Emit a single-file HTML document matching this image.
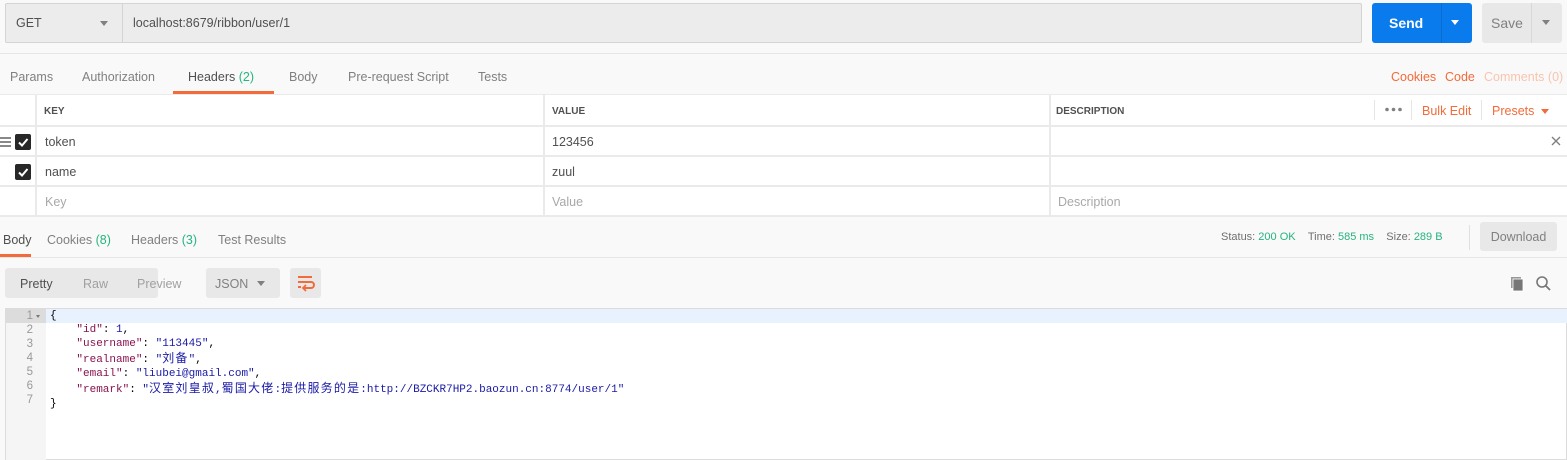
<!DOCTYPE html>
<html><head><meta charset="utf-8"><style>
*{margin:0;padding:0;box-sizing:border-box}
body{width:1567px;height:460px;background:#f9f9f9;font-family:"Liberation Sans","Noto Sans CJK SC",sans-serif;font-size:12px;color:#505050;position:relative;overflow:hidden}
.a{position:absolute}
.tab{position:absolute;top:70px;font-size:12.5px;color:#808080}
.hd{font-size:10px;font-weight:bold;color:#505050;position:absolute;top:106px}
.cb{position:absolute;width:16px;height:16px;background:#282828;border-radius:2px}
.cb svg{position:absolute;left:2px;top:2px}
.cell{position:absolute;font-size:12.5px;color:#505050}
.ph{color:#a8a8a8}
.code{position:absolute;left:50px;font-family:"Liberation Mono","Noto Sans CJK SC",monospace;font-size:11px;line-height:14px;white-space:pre;color:#000}
.k{color:#881350}.s{color:#1a1aa6}.n{color:#1a1aa6}
.cjk{font-family:"Noto Sans CJK SC",sans-serif;font-size:12px;letter-spacing:1.2px}
.ln{position:absolute;left:5px;width:41px;text-align:right;padding-right:13px;font-family:"Liberation Sans",sans-serif;font-size:11.5px;color:#999;line-height:14px}
</style></head><body>
<div class="a" style="left:5px;top:3px;width:1357px;height:40px;background:#ececec;border:1px solid #d4d4d4;border-radius:2px"></div>
<div class="a" style="left:122px;top:4px;width:1px;height:38px;background:#d4d4d4"></div>
<div class="a" style="left:16px;top:16px;font-size:12.5px;color:#505050">GET</div>
<div class="a" style="left:100px;top:21px;border:4px solid transparent;border-top:5px solid #808080"></div>
<div class="a" style="left:133px;top:16px;font-size:12.5px;color:#505050">localhost:8679/ribbon/user/1</div>
<div class="a" style="left:1372px;top:3px;width:100px;height:40px;background:#097bed;border-radius:3px"></div>
<div class="a" style="left:1441px;top:3px;width:1px;height:40px;background:#0a6cd0"></div>
<div class="a" style="left:1389px;top:15px;font-size:14px;font-weight:bold;color:#fff">Send</div>
<div class="a" style="left:1451px;top:20px;border:4px solid transparent;border-top:5px solid #fff"></div>
<div class="a" style="left:1482px;top:3px;width:80px;height:40px;background:#e8e8e8;border-radius:3px"></div>
<div class="a" style="left:1531px;top:3px;width:1px;height:40px;background:#d8d8d8"></div>
<div class="a" style="left:1491px;top:15px;font-size:14px;color:#808080">Save</div>
<div class="a" style="left:1542px;top:20px;border:4px solid transparent;border-top:5px solid #808080"></div>
<div class="a" style="left:0;top:53px;width:1567px;height:1px;background:#e6e6e6"></div>
<div class="tab" style="left:10px">Params</div>
<div class="tab" style="left:82px">Authorization</div>
<div class="tab" style="left:188px;color:#505050">Headers <span style="color:#26b47f">(2)</span></div>
<div class="tab" style="left:289px">Body</div>
<div class="tab" style="left:348px">Pre-request Script</div>
<div class="tab" style="left:478px">Tests</div>
<div class="a" style="left:173px;top:91px;width:101px;height:3px;background:#f26b3a"></div>
<div class="tab" style="left:1391px;color:#f26b3a">Cookies</div>
<div class="tab" style="left:1445px;color:#f26b3a">Code</div>
<div class="tab" style="left:1484px;color:#f8c4ae">Comments (0)</div>
<div class="a" style="left:0;top:94px;width:1567px;height:123px;background:#fff"></div>
<div class="a" style="left:0;top:94px;width:1567px;height:1px;background:#eaeaea"></div>
<div class="a" style="left:0;top:125px;width:1567px;height:2px;background:#eaeaea"></div>
<div class="a" style="left:0;top:155px;width:1567px;height:2px;background:#eaeaea"></div>
<div class="a" style="left:0;top:185px;width:1567px;height:2px;background:#eaeaea"></div>
<div class="a" style="left:0;top:215px;width:1567px;height:2px;background:#eaeaea"></div>
<div class="a" style="left:35px;top:94px;width:2px;height:123px;background:#eaeaea"></div>
<div class="a" style="left:543px;top:94px;width:2px;height:123px;background:#eaeaea"></div>
<div class="a" style="left:1049px;top:94px;width:2px;height:123px;background:#eaeaea"></div>
<div class="hd" style="left:44px">KEY</div>
<div class="hd" style="left:552px">VALUE</div>
<div class="hd" style="left:1056px">DESCRIPTION</div>
<div class="a" style="left:1374px;top:100px;width:1px;height:20px;background:#e6e6e6"></div>
<svg class="a" style="left:1385px;top:107px" width="18" height="5"><circle cx="2" cy="2.5" r="1.8" fill="#808080"/><circle cx="8.5" cy="2.5" r="1.8" fill="#808080"/><circle cx="15" cy="2.5" r="1.8" fill="#808080"/></svg>
<div class="a" style="left:1411px;top:100px;width:1px;height:20px;background:#e6e6e6"></div>
<div class="a" style="left:1422px;top:104px;font-size:12.5px;color:#f26b3a">Bulk Edit</div>
<div class="a" style="left:1481px;top:100px;width:1px;height:20px;background:#e6e6e6"></div>
<div class="a" style="left:1492px;top:104px;font-size:12.5px;color:#f26b3a">Presets</div>
<div class="a" style="left:1541px;top:109px;border:4px solid transparent;border-top:5px solid #f26b3a"></div>
<div class="a" style="left:0;top:137px;width:11px;height:2px;background:#888;box-shadow:0 4px 0 #888,0 8px 0 #888"></div>
<div class="cb" style="left:15px;top:134px"><svg width="12" height="12"><path d="M2 6.5 L5 9.5 L10.5 3" stroke="#fff" stroke-width="2" fill="none"/></svg></div>
<div class="cb" style="left:15px;top:164px"><svg width="12" height="12"><path d="M2 6.5 L5 9.5 L10.5 3" stroke="#fff" stroke-width="2" fill="none"/></svg></div>
<div class="cell" style="left:45px;top:135px">token</div>
<div class="cell" style="left:552px;top:135px">123456</div>
<svg class="a" style="left:1551px;top:136px" width="10" height="10"><path d="M1 1L9 9M9 1L1 9" stroke="#808080" stroke-width="1.4"/></svg>
<div class="cell" style="left:45px;top:165px">name</div>
<div class="cell" style="left:552px;top:165px">zuul</div>
<div class="cell ph" style="left:45px;top:195px">Key</div>
<div class="cell ph" style="left:552px;top:195px">Value</div>
<div class="cell ph" style="left:1058px;top:195px">Description</div>
<div class="tab" style="left:3px;top:233px;color:#505050">Body</div>
<div class="tab" style="left:47px;top:233px">Cookies <span style="color:#26b47f">(8)</span></div>
<div class="tab" style="left:131px;top:233px">Headers <span style="color:#26b47f">(3)</span></div>
<div class="tab" style="left:218px;top:233px">Test Results</div>
<div class="a" style="left:0;top:254px;width:31px;height:3px;background:#f26b3a"></div>
<div class="a" style="left:0;top:257px;width:1567px;height:1px;background:#e6e6e6"></div>
<div class="a" style="left:1221px;top:231px;font-size:11px;color:#707070">Status: <span style="color:#26b47f">200 OK</span>&nbsp;&nbsp;&nbsp;&nbsp;Time: <span style="color:#26b47f">585 ms</span>&nbsp;&nbsp;&nbsp;&nbsp;Size: <span style="color:#26b47f">289 B</span></div>
<div class="a" style="left:1469px;top:225px;width:1px;height:25px;background:#e0e0e0"></div>
<div class="a" style="left:1480px;top:222px;width:77px;height:29px;background:#e8e8e8;border-radius:3px;font-size:12.5px;color:#808080;text-align:center;line-height:30px">Download</div>
<div class="a" style="left:5px;top:268px;width:153px;height:30px;background:#e8e8e8;border-radius:3px"></div>
<div class="a" style="left:20px;top:277px;font-size:12.5px;color:#505050">Pretty</div>
<div class="a" style="left:83px;top:277px;font-size:12.5px;color:#a0a0a0">Raw</div>
<div class="a" style="left:137px;top:277px;font-size:12.5px;color:#a0a0a0">Preview</div>
<div class="a" style="left:206px;top:268px;width:74px;height:30px;background:#e8e8e8;border-radius:3px"></div>
<div class="a" style="left:215px;top:277px;font-size:12.5px;color:#808080">JSON</div>
<div class="a" style="left:257px;top:281px;border:4px solid transparent;border-top:5px solid #808080"></div>
<div class="a" style="left:290px;top:268px;width:31px;height:30px;background:#e8e8e8;border-radius:3px"></div>
<svg class="a" style="left:296px;top:274px" width="20" height="18"><path d="M2 3H16M2 8H15a3 3 0 0 1 0 6H8M2 13H5" stroke="#f26b3a" stroke-width="2" fill="none"/><path d="M10 11L7 14L10 17" stroke="#f26b3a" stroke-width="1.8" fill="none"/></svg>
<svg class="a" style="left:1510px;top:276px" width="16" height="16"><rect x="1" y="1" width="10" height="11" fill="#999"/><rect x="3" y="3" width="10" height="12" fill="#777" stroke="#fff" stroke-width="0.8"/></svg>
<svg class="a" style="left:1535px;top:275px" width="18" height="18"><circle cx="7" cy="7" r="5" stroke="#777" stroke-width="1.6" fill="none"/><path d="M10.5 10.5L15 15" stroke="#777" stroke-width="1.8"/></svg>
<div class="a" style="left:5px;top:308px;width:1562px;height:152px;background:#fff;border:1px solid #dcdcdc"></div>
<div class="a" style="left:6px;top:309px;width:40px;height:151px;background:#f5f5f5"></div>
<div class="a" style="left:46px;top:309px;width:1521px;height:14px;background:#e8f2fe"></div>
<div class="a" style="left:6px;top:309px;width:40px;height:14px;background:#dcdcdc"></div>
<div class="ln" style="top:309px">1<br>2<br>3<br>4<br>5<br>6<br>7</div>
<div class="a" style="left:36px;top:315px;border:2.5px solid transparent;border-top:3px solid #777"></div>
<div class="code" style="top:309px">{
    <span class="k">"id"</span>: <span class="n">1</span>,
    <span class="k">"username"</span>: <span class="s">"113445"</span>,
    <span class="k">"realname"</span>: <span class="s">"<span class="cjk">刘备</span>"</span>,
    <span class="k">"email"</span>: <span class="s">"liubei@gmail.com"</span>,
    <span class="k">"remark"</span>: <span class="s">"<span class="cjk">汉室刘皇叔</span>,<span class="cjk">蜀国大佬</span>:<span class="cjk">提供服务的是</span>:http://BZCKR7HP2.baozun.cn:8774/user/1"</span>
}</div>
</body></html>
